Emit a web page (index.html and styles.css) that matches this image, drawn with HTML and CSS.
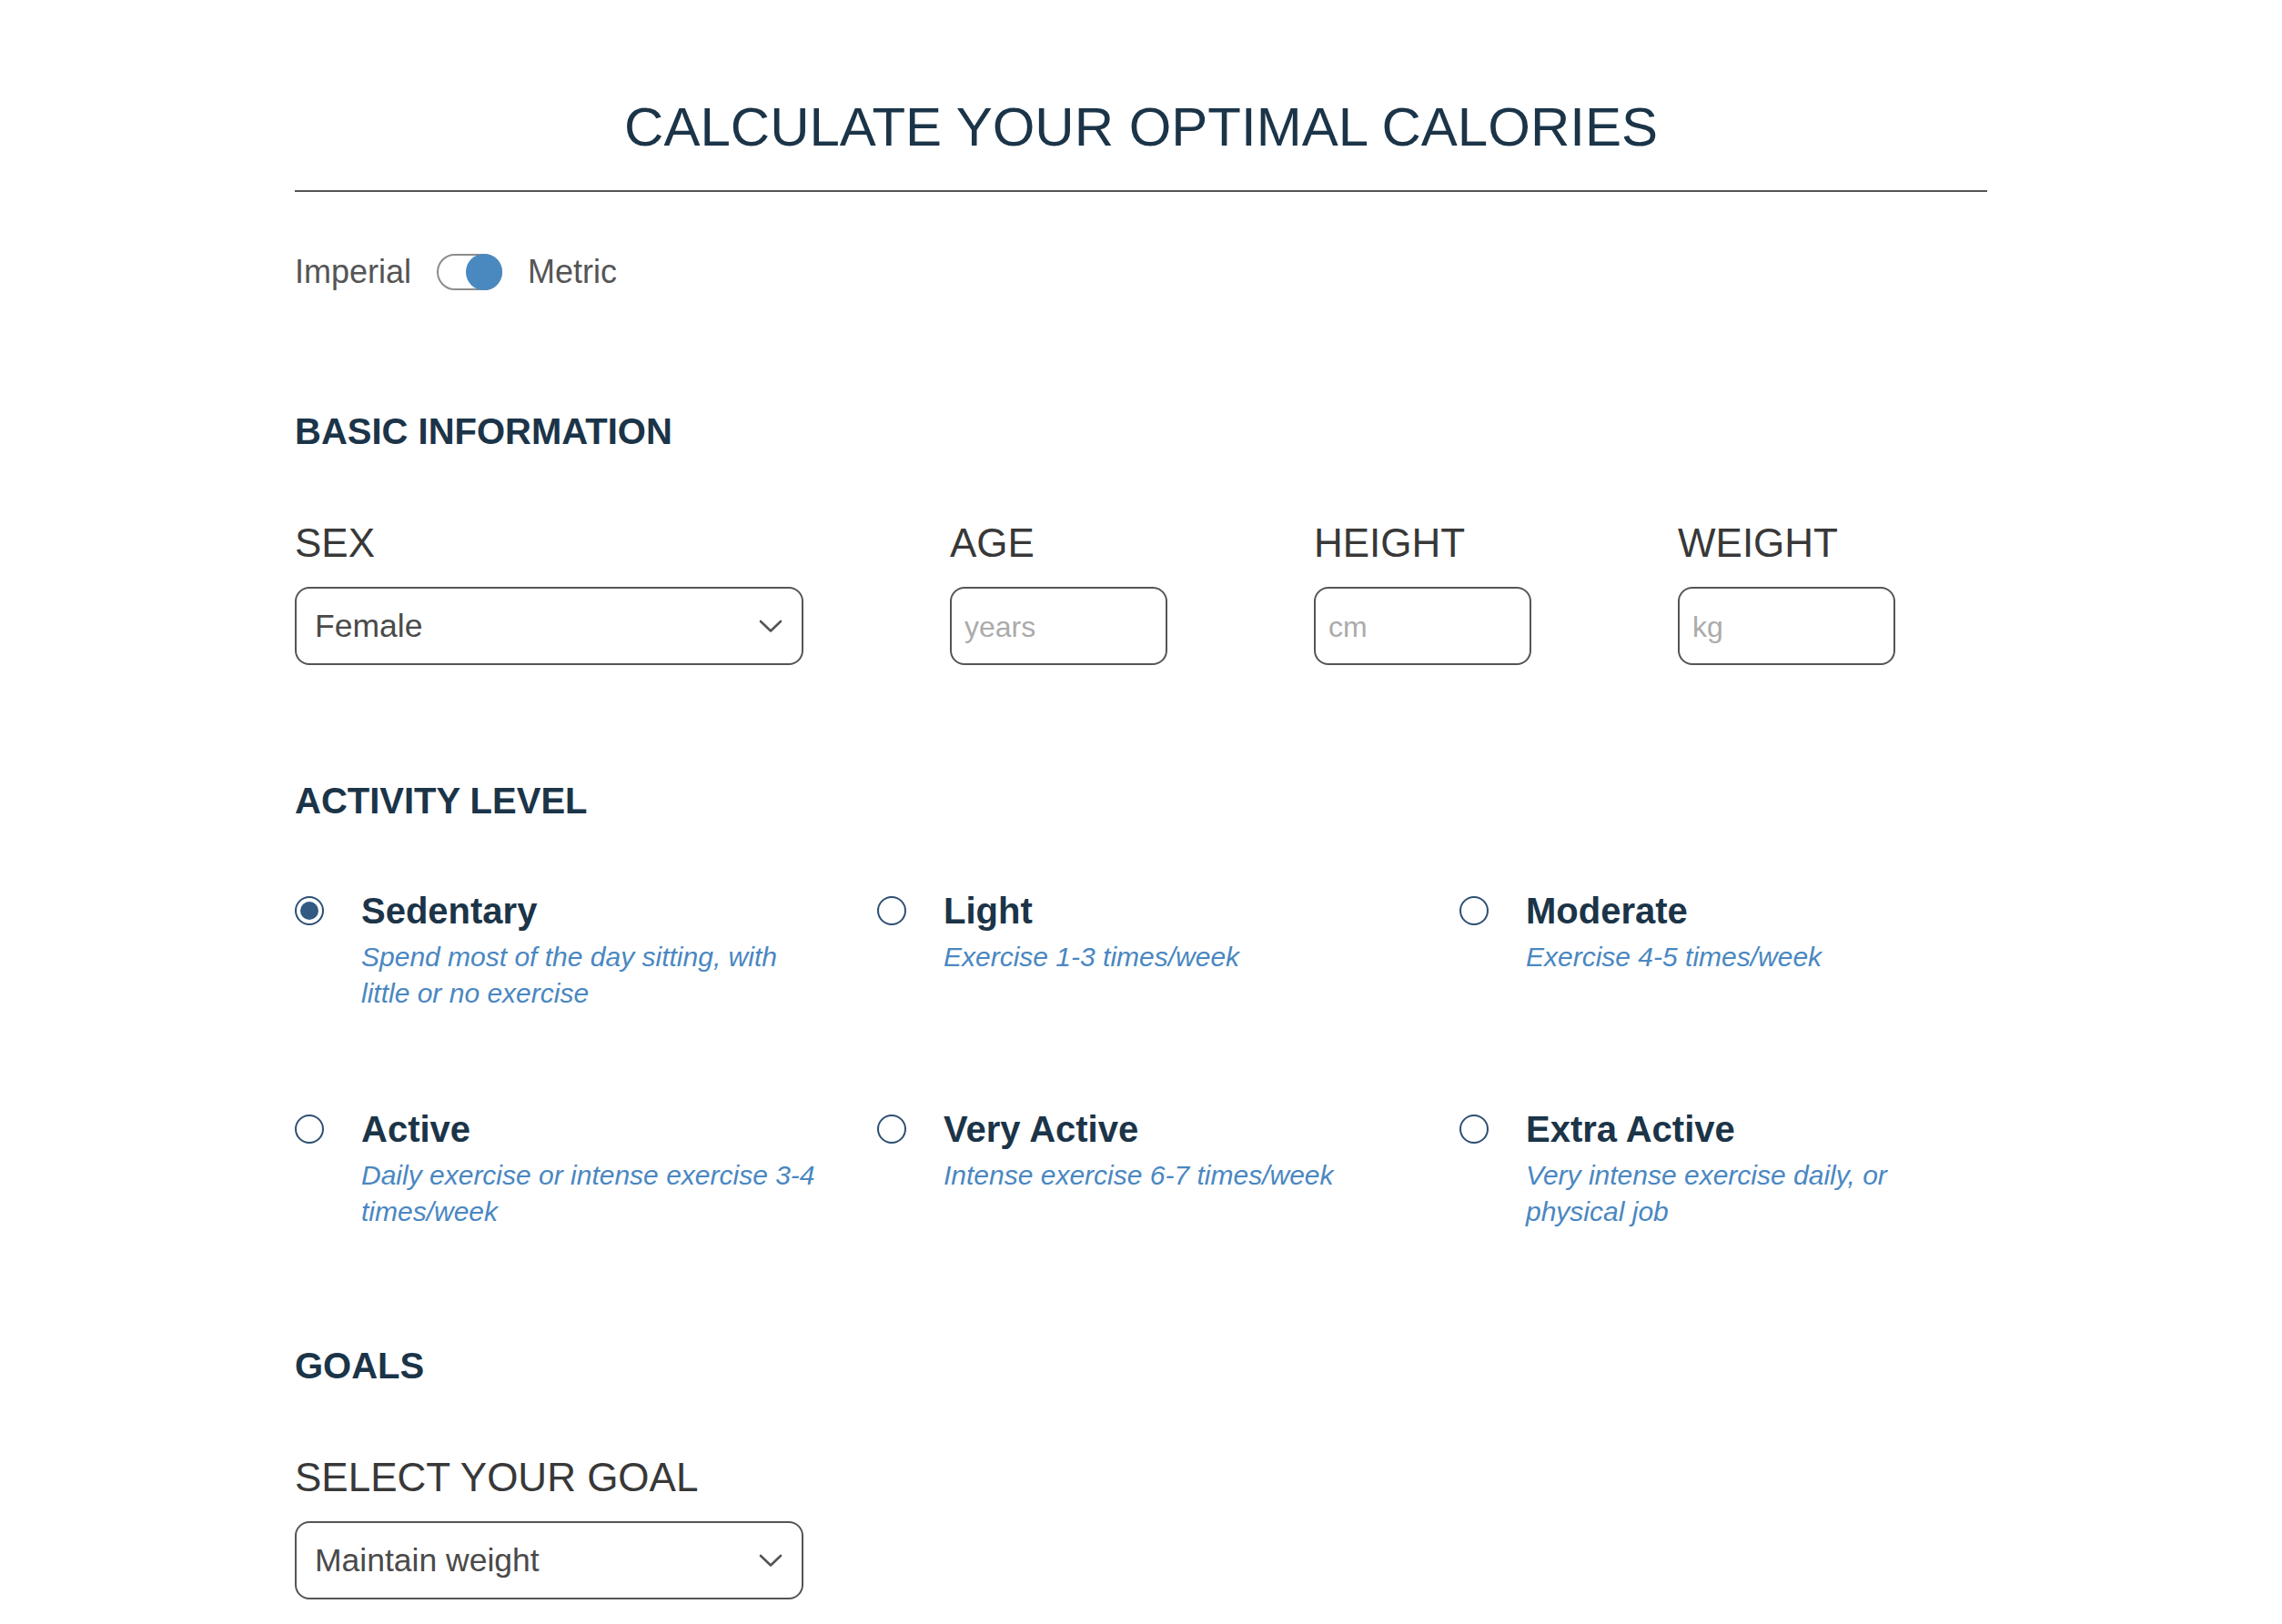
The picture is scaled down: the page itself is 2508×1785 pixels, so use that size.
FILE: index.html
```html
<!DOCTYPE html>
<html lang="en">
<head>
<meta charset="utf-8">
<title>Calculate your optimal calories</title>
<link rel="stylesheet" href="styles.css">
</head>
<body>
<main class="calc">
  <h1 class="title">CALCULATE YOUR OPTIMAL CALORIES</h1>

  <div class="units">
    <span class="unit">Imperial</span>
    <span class="switch"><span class="knob"></span></span>
    <span class="unit">Metric</span>
  </div>

  <section class="section section-first">
    <h2 class="section-title">BASIC INFORMATION</h2>
    <div class="fields">
      <div class="field">
        <div class="field-label">SEX</div>
        <div class="select select-wide">
          <span class="select-value">Female</span>
          <svg class="chevron" width="26" height="15" viewBox="0 0 26 15"><polyline points="2,2 13,12.5 24,2" fill="none" stroke="#555" stroke-width="2.6" stroke-linecap="round" stroke-linejoin="round"/></svg>
        </div>
      </div>
      <div class="field">
        <div class="field-label">AGE</div>
        <input class="text-input" type="text" placeholder="years">
      </div>
      <div class="field">
        <div class="field-label">HEIGHT</div>
        <input class="text-input" type="text" placeholder="cm">
      </div>
      <div class="field">
        <div class="field-label">WEIGHT</div>
        <input class="text-input" type="text" placeholder="kg">
      </div>
    </div>
  </section>

  <section class="section">
    <h2 class="section-title">ACTIVITY LEVEL</h2>
    <div class="options">
      <div class="option">
        <span class="radio checked"></span>
        <div class="option-text">
          <div class="option-label">Sedentary</div>
          <div class="option-desc">Spend most of the day sitting, with little or no exercise</div>
        </div>
      </div>
      <div class="option">
        <span class="radio"></span>
        <div class="option-text">
          <div class="option-label">Light</div>
          <div class="option-desc">Exercise 1-3 times/week</div>
        </div>
      </div>
      <div class="option">
        <span class="radio"></span>
        <div class="option-text">
          <div class="option-label">Moderate</div>
          <div class="option-desc">Exercise 4-5 times/week</div>
        </div>
      </div>
      <div class="option">
        <span class="radio"></span>
        <div class="option-text">
          <div class="option-label">Active</div>
          <div class="option-desc">Daily exercise or intense exercise 3-4 times/week</div>
        </div>
      </div>
      <div class="option">
        <span class="radio"></span>
        <div class="option-text">
          <div class="option-label">Very Active</div>
          <div class="option-desc">Intense exercise 6-7 times/week</div>
        </div>
      </div>
      <div class="option">
        <span class="radio"></span>
        <div class="option-text">
          <div class="option-label">Extra Active</div>
          <div class="option-desc">Very intense exercise daily, or physical job</div>
        </div>
      </div>
    </div>
  </section>

  <section class="section">
    <h2 class="section-title">GOALS</h2>
    <div class="field">
      <div class="field-label">SELECT YOUR GOAL</div>
      <div class="select select-wide">
        <span class="select-value">Maintain weight</span>
        <svg class="chevron" width="26" height="15" viewBox="0 0 26 15"><polyline points="2,2 13,12.5 24,2" fill="none" stroke="#555" stroke-width="2.6" stroke-linecap="round" stroke-linejoin="round"/></svg>
      </div>
    </div>
  </section>
</main>
</body>
</html>
```

FILE: styles.css
```css
* {
  box-sizing: border-box;
}

html, body {
  margin: 0;
  padding: 0;
  background: #ffffff;
}

body {
  font-family: "Liberation Sans", Arial, Helvetica, sans-serif;
  color: #333333;
}

.calc {
  width: 1860px;
  margin: 0 auto;
  padding-top: 104px;
  padding-bottom: 40px;
}

.title {
  margin: 0;
  font-size: 60px;
  line-height: 72px;
  font-weight: 400;
  color: #1b3448;
  text-align: center;
  padding-bottom: 33px;
  border-bottom: 2px solid #555555;
}

.units {
  display: flex;
  align-items: center;
  gap: 28px;
  margin-top: 68px;
  height: 40px;
}

.unit {
  font-size: 36px;
  line-height: 40px;
  color: #555555;
}

.switch {
  position: relative;
  display: flex;
  justify-content: flex-end;
  width: 72px;
  height: 40px;
  border: 2px solid #8c8c8c;
  border-radius: 20px;
  background: #ffffff;
}

.knob {
  width: 40px;
  height: 40px;
  margin: -2px -2px 0 0;
  border-radius: 50%;
  background: #4a89c0;
}

.section {
  margin-top: 125px;
}

.section-first {
  margin-top: 131px;
}

.section-title {
  margin: 0 0 73px;
  font-size: 40px;
  line-height: 48px;
  font-weight: 700;
  color: #1b3448;
}

.fields {
  display: grid;
  grid-template-columns: 720px 400px 400px 1fr;
}

.field-label {
  font-size: 44px;
  line-height: 52px;
  color: #383838;
  margin-bottom: 22px;
}

.select {
  display: flex;
  align-items: center;
  justify-content: space-between;
  height: 86px;
  border: 2px solid #555555;
  border-radius: 16px;
  padding: 0 21px 0 20px;
  background: #ffffff;
}

.select-wide {
  width: 559px;
}

.select-value {
  font-size: 35.5px;
  line-height: 40px;
  color: #4a4a4a;
}

.chevron {
  display: block;
  flex: none;
}

.text-input {
  display: block;
  width: 239px;
  height: 86px;
  border: 2px solid #555555;
  border-radius: 16px;
  padding: 2px 14px 0;
  font-family: "Liberation Sans", Arial, Helvetica, sans-serif;
  font-size: 32px;
  color: #444444;
  background: #ffffff;
  outline: none;
}

.text-input::placeholder {
  color: #ababab;
}

.options {
  display: grid;
  grid-template-columns: repeat(3, 580px);
  column-gap: 60px;
  row-gap: 105px;
}

.option {
  display: grid;
  grid-template-columns: 32px 1fr;
  column-gap: 41px;
  align-items: start;
}

.radio {
  width: 32px;
  height: 32px;
  margin-top: 8px;
  border: 2px solid #2d4f73;
  border-radius: 50%;
  display: flex;
  align-items: center;
  justify-content: center;
  background: #ffffff;
}

.radio.checked::after {
  content: "";
  width: 20px;
  height: 20px;
  border-radius: 50%;
  background: #325a82;
}

.option-label {
  font-size: 40px;
  line-height: 48px;
  font-weight: 700;
  color: #1b3448;
}

.option-desc {
  margin-top: 7px;
  font-size: 30px;
  line-height: 40px;
  font-style: italic;
  color: #4a87c1;
}
```
